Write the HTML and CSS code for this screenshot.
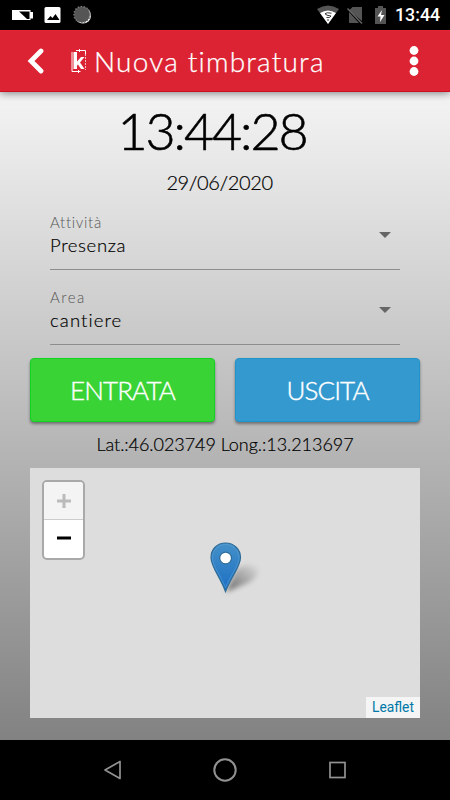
FILE: index.html
```html
<!DOCTYPE html>
<html lang="it">
<head>
<meta charset="utf-8">
<title>Nuova timbratura</title>
<link rel="stylesheet" href="styles.css">
</head>
<body>
<div class="status">
  <svg class="status-left" width="100" height="30" viewBox="0 0 100 30">
    <path fill="#fff" d="M12 10h18.500v2H33v6.500h-2.500V20H12z"/><path d="M19 11.500h10.500v7.500h-2.500z"/>
    <rect x="44.500" y="7" width="16" height="16" rx="1.500" fill="#fff"/><path d="M47 20l3.500-4 2 2 3-4 4 6z"/>
    <circle cx="83" cy="15.500" r="8" fill="#fff"/><circle cx="82" cy="14.500" r="8" fill="#555"/>
    <circle cx="82" cy="14.500" r="8" fill="none" stroke="#777" stroke-width="1.500" stroke-dasharray="1.500 1.500"/>
  </svg>
  <svg class="status-right" width="75" height="30" viewBox="315 0 75 30">
    <path fill="#555" d="M317 9q11-7 22 0L328 24z"/><path fill="#fff" d="M320 13q8-5 16 0l-8 11z"/>
    <path d="M331.500 13.200q-5-1.200-6.500.6 1 1.700 6 2.200-.5 2-4.500 1.500M327 20h2" fill="none" stroke="#222" stroke-width=".9"/>
    <path fill="#555" d="M352.500 7H362v14L349 10.500zM349 12l10 11h-10z"/><path d="M347.500 8.500l14.500 15" stroke="#666" stroke-width="1.500"/>
    <path fill="#555" d="M378 6h5v2h3v16h-11V8h3z"/><path fill="#fff" d="M382 10l-4.500 6.500h3L380 22l4.500-7H381z"/>
  </svg>
  <span class="status-time">13:44</span>
</div>
<header class="bar">
  <svg class="back" width="18" height="28" viewBox="0 0 18 28"><path d="M15 4L5 14l10 10" fill="none" stroke="#fff" stroke-width="4.800" stroke-linecap="round"/></svg>
  <svg class="logo" width="16" height="24" viewBox="0 0 16 24">
    <path d="M5 1.500h9.500V5M1 3v19.500h8.500M8.500 0v3M7.500 21v3" fill="none" stroke="#fff" stroke-width="1"/>
    <path d="M14.500 5v16" stroke="#fff" stroke-width="1" stroke-dasharray="2 1" opacity=".7"/>
    <path fill="#fff" d="M2.500 3H6v9.500L10 8h3.500l-4.500 5.500L13.500 20H10l-3-4.500-1 1V20H2.500z"/>
  </svg>
  <h1 class="title">Nuova timbratura</h1>
  <svg class="more" width="10" height="32" viewBox="0 0 10 32" fill="#fff"><circle cx="5" cy="5.500" r="4.400"/><circle cx="5" cy="16" r="4.400"/><circle cx="5" cy="26.500" r="4.400"/></svg>
</header>
<main class="page">
  <div class="clock">13:44:28</div>
  <div class="date">29/06/2020</div>
  <div class="field"><div class="label">Attività</div><div class="value">Presenza</div><i class="caret"></i></div>
  <div class="field"><div class="label area">Area</div><div class="value site">cantiere</div><i class="caret"></i></div>
  <div class="buttons"><button class="btn in">ENTRATA</button><button class="btn out">USCITA</button></div>
  <div class="coords">Lat.:46.023749 Long.:13.213697</div>
  <div class="map">
    <div class="zoom">
      <div class="zoom-in"><svg width="14" height="14" viewBox="0 0 14 14"><path d="M0 7h14M7 0v14" stroke="#bbb" stroke-width="3"/></svg></div>
      <div class="zoom-out"><svg width="14" height="14" viewBox="0 0 14 14"><path d="M0 6h14" stroke="#000" stroke-width="3"/></svg></div>
    </div>
    <svg class="marker" width="60" height="56" viewBox="0 0 60 56">
      <defs>
        <linearGradient id="pin" x1="0" y1="0" x2="0" y2="1"><stop offset="0" stop-color="#4590c8"/><stop offset="1" stop-color="#1b6fc4"/></linearGradient>
        <linearGradient id="shade" x1="0" y1="1" x2="1" y2="0"><stop offset="0" stop-color="#000" stop-opacity=".55"/><stop offset=".5" stop-color="#000" stop-opacity=".26"/><stop offset="1" stop-color="#000" stop-opacity="0"/></linearGradient>
        <filter id="soft" x="-30%" y="-30%" width="160%" height="160%"><feGaussianBlur stdDeviation="2.400"/></filter>
      </defs>
      <path d="M16 50L26 28Q36 20 46 25Q52 31 40 40Z" fill="url(#shade)" filter="url(#soft)"/>
      <path d="M15.500 1C7 1 1 7.500 1 15.500C1 24.500 10 35 15.500 49.500C21 35 30.500 24.500 30.500 15.500C30.500 7.500 24 1 15.500 1z" fill="url(#pin)" stroke="#2e6c97" stroke-width="1.200"/>
      <path d="M15.500 2.500C8 2.500 2.400 8.500 2.400 15.500C2.400 23.500 10.500 33.500 15.500 45.500C20.500 33.500 29 23.500 29 15.500C29 8.500 23 2.500 15.500 2.500z" fill="none" stroke="#5ba3d8" stroke-width="1" opacity=".55"/>
      <circle cx="15.600" cy="16" r="5.900" fill="#fff" stroke="#2e6c97" stroke-width="1.200"/>
    </svg>
    <a class="attribution">Leaflet</a>
  </div>
</main>
<nav class="nav">
  <svg width="450" height="60" viewBox="0 0 450 60" fill="none" stroke="#929292">
    <path d="M120 21.500v17L105 30z" stroke-width="1.700" stroke-linejoin="round"/><circle cx="225" cy="30" r="10.700" stroke-width="2"/><rect x="330" y="22.500" width="15" height="15" stroke-width="1.700"/>
  </svg>
</nav>
</body>
</html>
```

FILE: styles.css
```css
* { box-sizing: border-box; }
body { margin: 0; width: 450px; height: 800px; overflow: hidden; display: flex; flex-direction: column; background: #000; color: #000; font-family: Lato, sans-serif; font-weight: 300; }
svg { display: block; flex: none; }
.status { height: 30px; flex: none; display: flex; align-items: center; }
.status-right { margin-left: 215px; }
.status-time { margin-left: 5px; color: #fff; font: 500 17.800px/30px Roboto, sans-serif; }
.bar { position: relative; height: 62px; flex: none; display: flex; align-items: center; padding-left: 26px; background: #dc2333; border-top: 1px solid #e82233; border-bottom: 1px solid #cc1122; box-shadow: 0 1px 8px rgba(0,0,0,.5); z-index: 1; }
.logo { margin-left: 27px; }
.title { margin: 0 0 0 7px; width: 236px; white-space: nowrap; color: #fff; font-size: 28px; line-height: 60px; font-weight: 300; letter-spacing: 1.200px; -webkit-text-stroke: .25px #fff; }
.more { margin-left: 79px; }
.page { height: 648px; flex: none; padding: 0 30px; background: linear-gradient(#f4f4f4, #828282); text-align: center; }
.clock { height: 78px; font-size: 52px; line-height: 76px; letter-spacing: -2.100px; margin-left: -26px; white-space: nowrap; -webkit-text-stroke: .6px #000; }
.date { height: 27px; font-size: 20px; line-height: 25px; letter-spacing: -.400px; margin-left: -11px; -webkit-text-stroke: .2px #000; }
.field { position: relative; height: 75px; margin: 0 20px; padding-top: 17px; text-align: left; border-bottom: 1px solid #8d8d8d; }
.date + .field { height: 73px; padding-top: 15px; }
.label { font-size: 15px; line-height: 20px; color: #555; letter-spacing: .7px; }
.label.area { letter-spacing: 1.500px; }
.value { font-size: 18.500px; line-height: 26px; letter-spacing: .650px; -webkit-text-stroke: .2px #000; }
.value.site { letter-spacing: 1.100px; }
.caret { position: absolute; right: 9px; bottom: 31px; border: 6px solid transparent; border-top-color: #666; border-bottom: 0; }
.buttons { display: grid; grid-template-columns: 185px 185px; gap: 20px; margin-top: 13px; }
.btn { height: 64px; padding: 0; border: 1px solid #11d321; border-radius: 4px; background: #39d336; color: #fff; font: 300 26px/62px Lato, sans-serif; letter-spacing: -.900px; -webkit-text-stroke: .4px #fff; box-shadow: 0 2px 3px rgba(0,0,0,.4); }
.btn.out { background: #3399cf; border-color: #1f93cc; }
.coords { height: 46px; font-size: 18px; line-height: 45px; white-space: nowrap; letter-spacing: -.050px; -webkit-text-stroke: .2px #000; }
.map { position: relative; height: 250px; background: #ddd; }
.zoom { position: absolute; left: 12px; top: 12px; width: 43px; height: 80px; border: 2px solid #a9a9a9; border-radius: 5px; background: #fff; overflow: hidden; }
.zoom-in, .zoom-out { display: flex; align-items: center; justify-content: center; height: 38px; }
.zoom-in { background: #f4f4f4; border-bottom: 1px solid #ccc; }
.zoom svg { margin-left: 1px; }
.marker { position: absolute; left: 180px; top: 74px; }
.attribution { position: absolute; right: 0; bottom: 0; width: 54px; height: 21px; background: #f5f5f5; color: #0078a8; font: 400 13.800px/20px Roboto, sans-serif; }
.nav { height: 60px; flex: none; }
```
